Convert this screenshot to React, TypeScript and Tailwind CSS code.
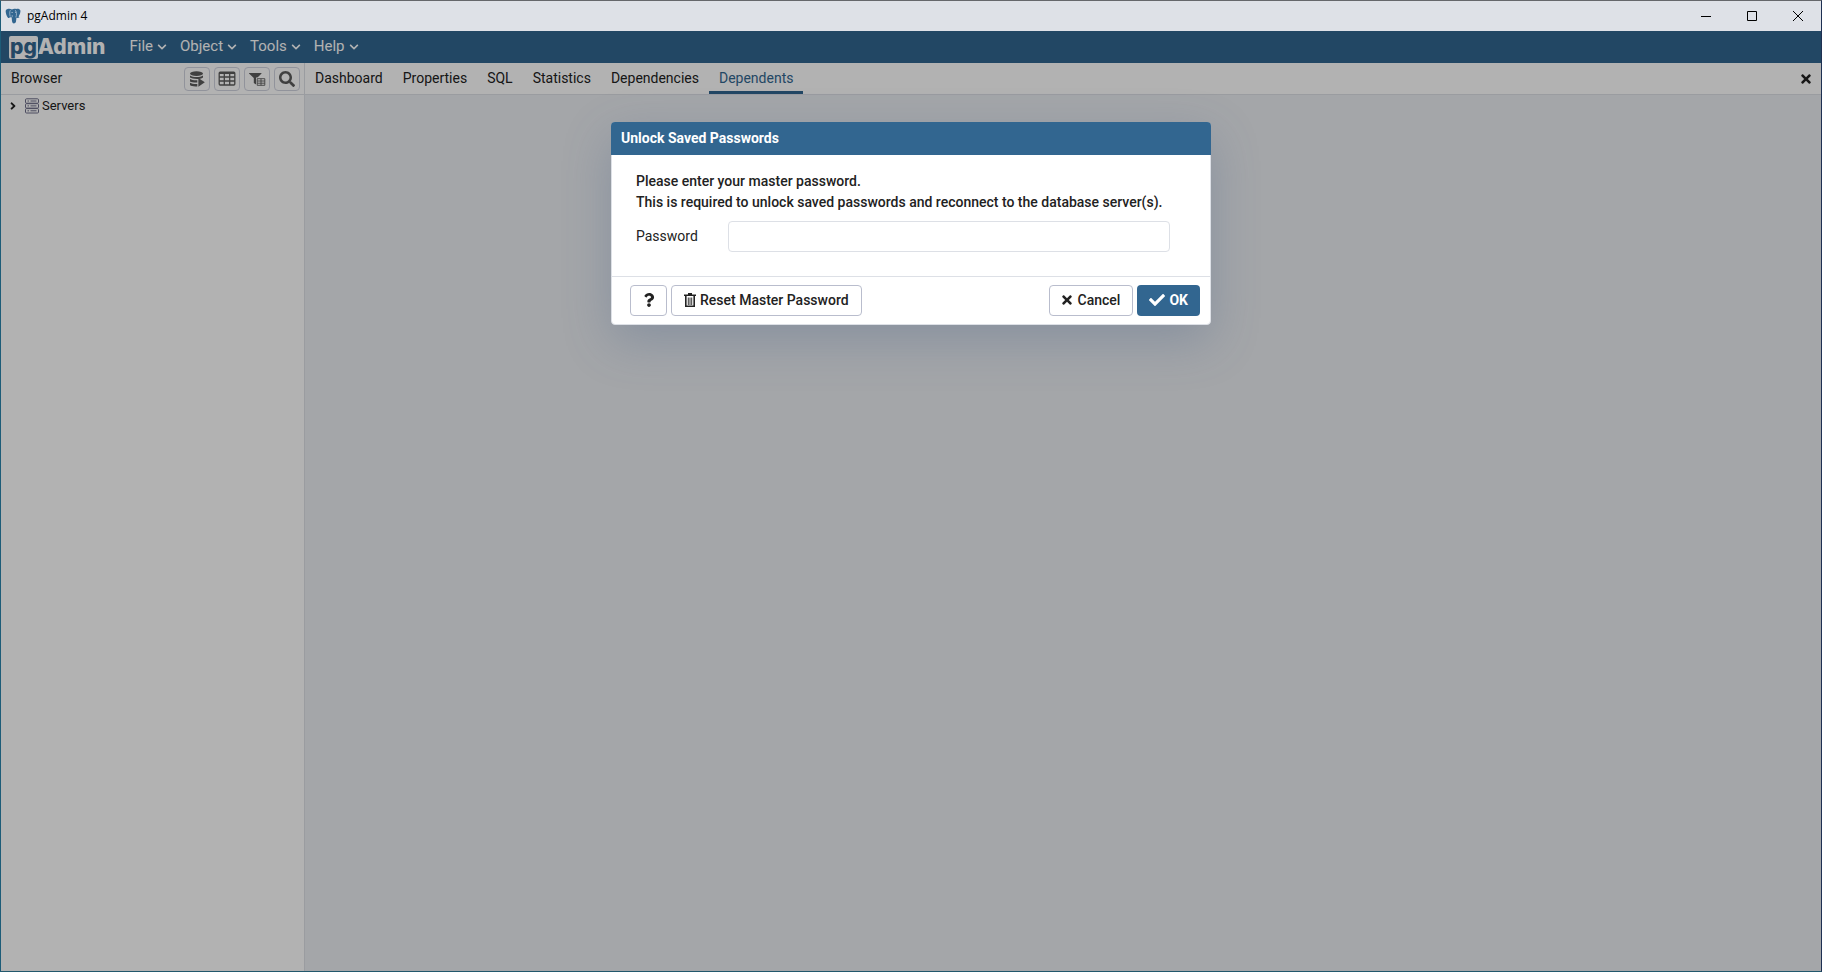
import { useState } from 'react'
import type { ReactNode } from 'react'
import { FaAngleRight, FaCheck, FaChevronDown, FaQuestion, FaSearch, FaTimes } from 'react-icons/fa'

const MENUS = ['File', 'Object', 'Tools', 'Help']
const TABS = ['Dashboard', 'Properties', 'SQL', 'Statistics', 'Dependencies', 'Dependents']

function ElephantIcon() {
  return (
    <svg viewBox="0 0 16 16" className="size-4">
      <path
        d="M2.500 1C1 1.300.4 2.500.8 4.500c.4 2.300 1.300 4.800 2.400 5.400.8.300 1.300-.4 1.900-1 .3.500.9.700 1.600.7.200 1.800 0 4 1 5.400.9.900 2.700.5 3.200-.9.400-1.400.3-3 .5-4.300.9.200 2.300.1 3.200-.6-.7-.2-1.100-.3-1-.6 1.200-1.800 2.100-4.500 1.800-6C14.900 1 13 .6 11.300 1 9.700.6 8.100.7 7 1.400 5.700.8 4 .6 2.500 1z"
        fill="#326690"
      />
      <path
        d="M5.200 8.500C4.600 6.500 4.500 3.500 5.400 2.200M10.800 9.300c.3-1.300.9-2 .7-3.600-.1-1.500-.4-2.600-1.200-3.500M6.700 9.500c.6-.6.700-1.400.5-2.300"
        fill="none"
        stroke="#b9cbdc"
        strokeWidth=".7"
      />
      <path d="M6.600 4.500h1M10 4.300h.8" stroke="#dee1e7" strokeWidth=".8" />
    </svg>
  )
}

function QueryToolIcon() {
  return (
    <svg viewBox="0 0 16 16" className="size-4" fill="currentColor">
      <ellipse cx="7.500" cy="2.600" rx="6.500" ry="2.400" />
      <path d="M1 4.400c1.600 1.200 4 1.500 6.500 1.500s4.900-.3 6.500-1.500v2.200c-1 .8-2.600 1.200-4 1.300H8C5 7.900 2.200 7.500 1 6.600z" />
      <path d="M1 8c1.700 1 4 1.300 7.300 1.200v2.300C5 11.600 2.200 11.200 1 10.400z" />
      <path d="M1 11.700c1.700 1 4 1.300 7.300 1.200v2.500C5 15.600 1.800 15.300 1 14z" />
      <path d="M9.400 7l6.400 4.300-6.400 4.500z" />
    </svg>
  )
}

function TableIcon() {
  return (
    <svg viewBox="0 0 18 16" className="h-4 w-[18px]" fill="none" stroke="currentColor" strokeWidth="1.300">
      <rect x="1.200" y="1.200" width="15.600" height="12.800" rx="1" />
      <path d="M1 2h16" strokeWidth="2" />
      <path d="M1 6h16M1 10h16M6.300 2v12M11.700 2v12" />
    </svg>
  )
}

function FilterTableIcon() {
  return (
    <svg viewBox="0 0 18 16" className="h-4 w-[18px]" fill="currentColor">
      <path d="M1 2h12.500v.6L9 7v7L5.800 12V7L1 2.600z" />
      <path d="M8 6.500h10v9H8z" fill="#fff" />
      <path
        d="M9.200 7.700h7.600v6.600H9.200zM9.200 10h7.600M9.200 12.200h7.600M13 7.700v6.600"
        fill="none"
        stroke="currentColor"
        strokeWidth=".9"
      />
    </svg>
  )
}

function ServersIcon() {
  return (
    <svg viewBox="0 0 14 16" className="h-4 w-3.5" fill="none" stroke="#6c6c88">
      <rect x=".5" y=".8" width="13" height="4.400" rx="1" />
      <rect x=".5" y="5.700" width="13" height="4.400" rx="1" />
      <rect x=".5" y="10.600" width="13" height="4.400" rx="1" />
      <path d="M2.500 3H4M5.500 3h6M2.500 7.900H4M5.500 7.900h6M2.500 12.800H4M5.500 12.800h6" />
    </svg>
  )
}

function TrashIcon() {
  return (
    <svg viewBox="0 0 12 14" className="h-3.5 w-3" fill="none" stroke="currentColor">
      <path d="M0 2.200h12M4 .7h4" strokeWidth="1.600" />
      <path d="M1.800 3v10.200h8.400V3" strokeWidth="1.600" />
      <path d="M4.300 4.500v7.500M6 4.500v7.500M7.700 4.500v7.500" strokeWidth=".9" />
    </svg>
  )
}

function TitleBar() {
  return (
    <header className="flex h-[30px] items-center bg-[#dee1e7] pl-1 text-black">
      <ElephantIcon />
      <h1 className="ml-1.5 font-['Open_Sans',sans-serif] text-xs">pgAdmin 4</h1>
      <div className="ml-auto flex">
        <button aria-label="Minimize" className="flex h-[30px] w-[46px] items-center justify-center">
          <svg viewBox="0 0 10 10" className="size-2.5" stroke="currentColor">
            <path d="M0 5.500h10" />
          </svg>
        </button>
        <button aria-label="Maximize" className="flex h-[30px] w-[46px] items-center justify-center">
          <svg viewBox="0 0 10 10" className="size-2.5" fill="none" stroke="currentColor">
            <path d="M.5.5h9v9h-9z" />
          </svg>
        </button>
        <button aria-label="Close" className="flex h-[30px] w-[46px] items-center justify-center">
          <svg viewBox="0 0 10 10" className="size-2.5" stroke="currentColor">
            <path d="M0 0l10 10M10 0L0 10" />
          </svg>
        </button>
      </div>
    </header>
  )
}

function MenuBar() {
  return (
    <nav className="flex h-8 items-center bg-[#326690] pl-2 text-white">
      <div className="flex items-center font-['Inter',sans-serif] text-[21px] leading-5 font-extrabold">
        <span className="flex h-[23px] items-center rounded-xs bg-white px-px text-[#326690]">pg</span>
        <span>Admin</span>
      </div>
      <div className="ml-6 flex gap-[13px]">
        {MENUS.map((menu) => (
          <button key={menu} className="flex items-center gap-1 text-[15px]">
            {menu}
            <FaChevronDown className="size-2.5" />
          </button>
        ))}
      </div>
    </nav>
  )
}

function ToolButton({ label, children }: { label: string; children: ReactNode }) {
  return (
    <button
      aria-label={label}
      className="flex h-6 w-[26px] items-center justify-center rounded border border-[#d0d3df] text-[#5c5c5c]"
    >
      {children}
    </button>
  )
}

function BrowserPanel() {
  return (
    <aside className="flex w-[304px] shrink-0 flex-col border-r border-[#dde0e6] bg-white">
      <div className="flex h-8 items-center border-b border-[#dde0e6] pr-1 pl-2.5">
        <h2 className="pb-0.5">Browser</h2>
        <div className="ml-auto flex gap-1">
          <ToolButton label="Query Tool">
            <QueryToolIcon />
          </ToolButton>
          <ToolButton label="View Data">
            <TableIcon />
          </ToolButton>
          <ToolButton label="Filtered Rows">
            <FilterTableIcon />
          </ToolButton>
          <ToolButton label="Search Objects">
            <FaSearch className="size-4" />
          </ToolButton>
        </div>
      </div>
      <button className="flex h-[22px] items-center pl-1.5 text-[13px]">
        <FaAngleRight className="size-3" />
        <span className="ml-1.5 flex items-center gap-[3px]">
          <ServersIcon />
          Servers
        </span>
      </button>
    </aside>
  )
}

function TabPanel() {
  const [active, setActive] = useState('Dependents')

  return (
    <main className="flex min-w-0 flex-1 flex-col bg-[#ebeef3]">
      <div className="flex h-8 border-b border-[#dde0e6] bg-white">
        {TABS.map((tab) => (
          <button
            key={tab}
            onClick={() => setActive(tab)}
            className={
              tab === active
                ? 'border-b-3 border-[#326690] px-2.5 pt-0.5 text-[#326690]'
                : 'border-b-3 border-transparent px-2.5 pt-0.5'
            }
          >
            {tab}
          </button>
        ))}
        <button aria-label="Close panel" className="ml-auto px-2">
          <FaTimes className="size-3.5" />
        </button>
      </div>
    </main>
  )
}

function UnlockDialog() {
  const [password, setPassword] = useState('')

  return (
    <form
      role="dialog"
      aria-labelledby="unlock-title"
      onSubmit={(e) => e.preventDefault()}
      className="w-[600px] rounded border border-[#dde0e6] bg-white shadow-[0_16px_48px_rgba(70,95,135,0.3)]"
    >
      <h2
        id="unlock-title"
        className="-mx-px -mt-px flex h-[33px] items-center rounded-t bg-[#326690] px-2.5 pb-0.5 font-bold text-white"
      >
        Unlock Saved Passwords
      </h2>
      <div className="px-6 pt-4 pb-6">
        <p className="leading-[21px] font-medium">
          Please enter your master password.
          <br />
          This is required to unlock saved passwords and reconnect to the database server(s).
        </p>
        <div className="mt-2 flex items-center pr-4">
          <label htmlFor="password" className="w-[92px] pb-0.5">
            Password
          </label>
          <input
            id="password"
            type="password"
            value={password}
            onChange={(e) => setPassword(e.target.value)}
            className="h-[31px] min-w-0 flex-1 rounded border border-[#dde0e6] px-2 outline-none"
          />
        </div>
      </div>
      <div className="flex gap-1 border-t border-[#dde0e6] py-2 pr-2.5 pl-[18px] font-medium">
        <button
          type="button"
          aria-label="Help"
          className="flex h-[31px] w-[37px] items-center justify-center rounded border border-[#b9bdcd] pb-0.5"
        >
          <FaQuestion className="size-3.5" />
        </button>
        <button
          type="button"
          className="flex h-[31px] items-center gap-1 rounded border border-[#b9bdcd] px-3 pb-0.5"
        >
          <TrashIcon />
          Reset Master Password
        </button>
        <button
          type="button"
          className="ml-auto flex h-[31px] items-center gap-1.5 rounded border border-[#b9bdcd] px-3 pb-0.5"
        >
          <FaTimes className="h-3.5 w-2.5" />
          Cancel
        </button>
        <button
          type="submit"
          className="flex h-[31px] items-center gap-1 rounded bg-[#326690] px-3 pb-0.5 font-bold text-white"
        >
          <FaCheck className="size-4" />
          OK
        </button>
      </div>
    </form>
  )
}

export default function App() {
  return (
    <div className="flex min-h-screen flex-col border border-t-[#65676b] border-r-[#1e3052] border-b-[#22586c] border-l-[#1d5c78] font-['Roboto',sans-serif] text-sm text-[#222]">
      <TitleBar />
      <div className="relative flex flex-1 flex-col">
        <MenuBar />
        <div className="flex flex-1">
          <BrowserPanel />
          <TabPanel />
        </div>
        <div className="absolute inset-0 flex items-start justify-center bg-black/30 pt-[91px]">
          <UnlockDialog />
        </div>
      </div>
    </div>
  )
}
